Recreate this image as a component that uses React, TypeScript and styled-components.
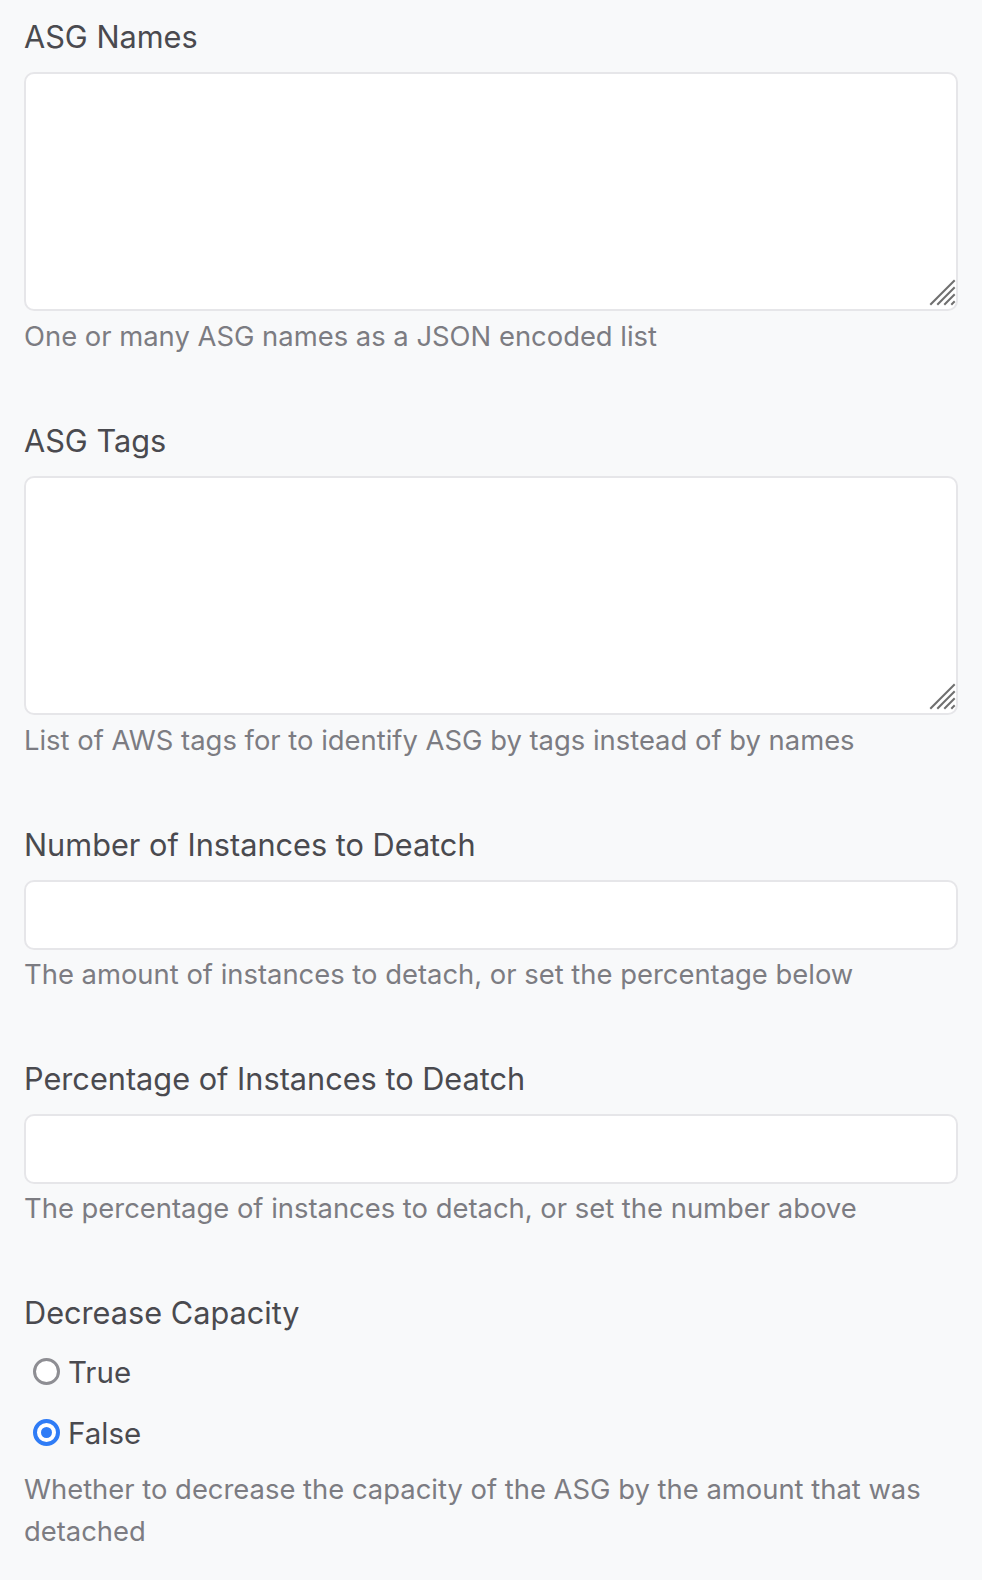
import React from "react";
import styled, { createGlobalStyle } from "styled-components";

const Global = createGlobalStyle`
  html, body { margin: 0; padding: 0; background: #f8f9fa; }
  body { font-family: Inter, "Liberation Sans", Arial, sans-serif; }
  * { box-sizing: border-box; }
`;

const Form = styled.form`
  display: flex;
  flex-direction: column;
  gap: 62px;
  padding: 15px 24px 40px;
`;

const Field = styled.div`
  display: flex;
  flex-direction: column;
`;

const Label = styled.label`
  font-size: 30.7px;
  line-height: 44px;
  color: #4a4a4f;
  margin-bottom: 13px;
`;

const AreaWrap = styled.div`
  position: relative;
`;

const TextArea = styled.textarea`
  display: block;
  width: 100%;
  height: 239px;
  border: 2px solid #e6e6e9;
  border-radius: 10px;
  background: #fff;
  resize: none;
  font: inherit;
  outline: none;
`;

const Grip = styled.svg`
  position: absolute;
  right: 2px;
  bottom: 4px;
  width: 28px;
  height: 28px;
  pointer-events: none;
`;

const Input = styled.input`
  display: block;
  width: 100%;
  height: 70px;
  border: 2px solid #e6e6e9;
  border-radius: 10px;
  background: #fff;
  font: inherit;
  outline: none;
`;

const Help = styled.div<{ $gap?: number }>`
  margin-top: ${(p) => p.$gap ?? 3}px;
  font-size: 27.4px;
  line-height: 42px;
  color: #7c7c82;
`;

const RadioRow = styled.label`
  display: flex;
  align-items: center;
  height: 61px;
  padding-left: 9px;
  gap: 8px;
  font-size: 29.5px;
  color: #4a4a4f;
`;

const RadioGroup = styled.div`
  display: flex;
  flex-direction: column;
  margin-top: -7px;
`;

const Dot = styled.span<{ $checked?: boolean }>`
  width: 27px;
  height: 27px;
  border-radius: 50%;
  background: #fff;
  border: ${(p) => (p.$checked ? "4px solid #2f7cf6" : "3px solid #8e8e93")};
  display: flex;
  align-items: center;
  justify-content: center;
  &::after {
    content: "";
    display: ${(p) => (p.$checked ? "block" : "none")};
    width: 11px;
    height: 11px;
    border-radius: 50%;
    background: #2f7cf6;
  }
`;

function ResizeArea() {
  return (
    <AreaWrap>
      <TextArea />
      <Grip viewBox="0 0 28 28">
        <g stroke="#6f6f6f" strokeWidth="2" strokeLinecap="square">
          <line x1="3" y1="25" x2="26" y2="2" />
          <line x1="10" y1="25" x2="26" y2="9" />
          <line x1="17" y1="25" x2="26" y2="16" />
          <line x1="24" y1="25" x2="26" y2="23" />
        </g>
      </Grip>
    </AreaWrap>
  );
}

export default function App() {
  return (
    <>
      <Global />
      <Form>
        <Field>
          <Label>ASG Names</Label>
          <ResizeArea />
          <Help $gap={4}>One or many ASG names as a JSON encoded list</Help>
        </Field>
        <Field>
          <Label>ASG Tags</Label>
          <ResizeArea />
          <Help $gap={4}>List of AWS tags for to identify ASG by tags instead of by names</Help>
        </Field>
        <Field>
          <Label>Number of Instances to Deatch</Label>
          <Input />
          <Help>The amount of instances to detach, or set the percentage below</Help>
        </Field>
        <Field>
          <Label>Percentage of Instances to Deatch</Label>
          <Input />
          <Help>The percentage of instances to detach, or set the number above</Help>
        </Field>
        <Field>
          <Label>Decrease Capacity</Label>
          <RadioGroup>
            <RadioRow>
              <Dot />
              True
            </RadioRow>
            <RadioRow>
              <Dot $checked />
              False
            </RadioRow>
          </RadioGroup>
          <Help $gap={5}>Whether to decrease the capacity of the ASG by the amount that was detached</Help>
        </Field>
      </Form>
    </>
  );
}
